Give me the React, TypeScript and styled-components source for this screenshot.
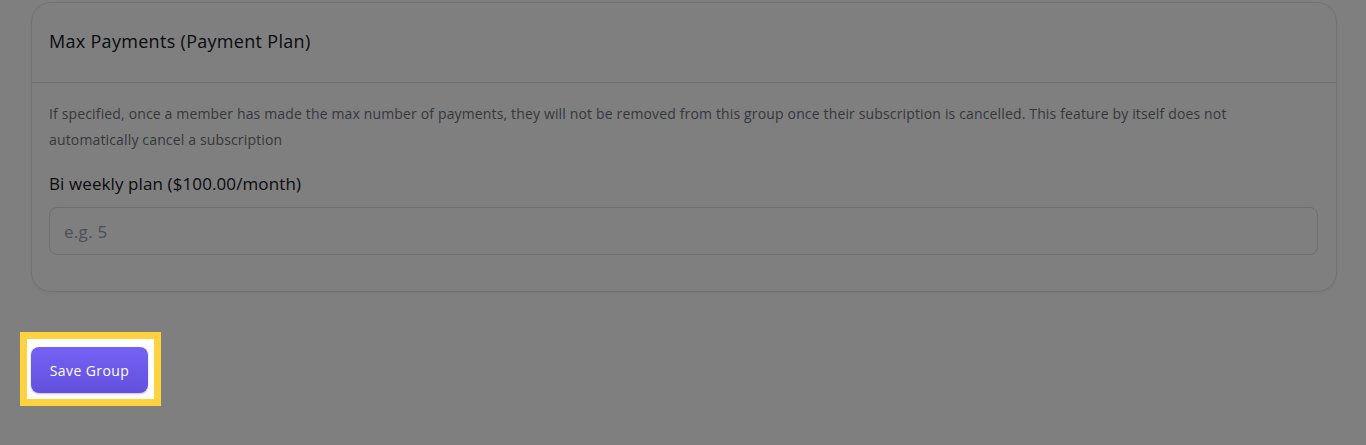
import { createGlobalStyle } from 'styled-components'
import styled from 'styled-components'

const GlobalStyle = createGlobalStyle`
  html, body {
    margin: 0;
    padding: 0;
    background: #ffffff;
    font-family: 'Open Sans', 'Noto Sans', sans-serif;
  }
`

const Page = styled.div`
  position: relative;
  min-height: 445px;
  padding: 2px 29px 0 31px;
  box-sizing: border-box;
`

const Overlay = styled.div`
  position: fixed;
  inset: 0;
  background: rgba(0, 0, 0, 0.5);
  z-index: 1;
`

const Card = styled.section`
  background: #ffffff;
  border: 1px solid #e4e5ea;
  border-radius: 20px;
  box-shadow: 0 1px 3px rgba(0, 0, 0, 0.06);
`

const CardHeader = styled.header`
  display: flex;
  align-items: center;
  height: 80px;
  padding: 0 17px 4px;
  box-sizing: border-box;
  border-bottom: 1px solid #dcdde2;
`

const Title = styled.h2`
  margin: 0;
  font-size: 18px;
  font-weight: 500;
  letter-spacing: 0.3px;
  color: #15161e;
`

const CardBody = styled.div`
  padding: 18px 18px 36px 17px;
`

const Description = styled.p`
  margin: 0;
  max-width: 1240px;
  font-size: 14px;
  line-height: 26px;
  letter-spacing: 0.15px;
  color: #6b6f7b;
`

const Field = styled.label`
  display: flex;
  flex-direction: column;
  gap: 11px;
  margin-top: 19px;
`

const LabelText = styled.span`
  font-size: 17px;
  line-height: 24px;
  font-weight: 500;
  letter-spacing: 0.1px;
  color: #15161e;
`

const Input = styled.input`
  height: 48px;
  box-sizing: border-box;
  border: 1px solid #dcdde2;
  border-radius: 8px;
  padding: 0 14px;
  font-family: inherit;
  font-size: 17px;
  letter-spacing: 0.3px;
  color: #1c1d26;
  background: #ffffff;

  &::placeholder {
    color: #9a9daa;
  }
`

const Actions = styled.div`
  display: flex;
  margin: 40px 0 0 -11px;
`

const Highlight = styled.div`
  position: relative;
  z-index: 2;
  display: flex;
  padding: 8px 6px 6px 4px;
  background: #ffffff;
  border: 7px solid #ffd23f;
`

const PrimaryButton = styled.button`
  width: 117px;
  height: 46px;
  border: none;
  border-radius: 8px;
  background: linear-gradient(180deg, #7462f6 0%, #6450dc 100%);
  box-shadow: 0 1px 2px rgba(60, 40, 160, 0.3);
  color: #ffffff;
  font-family: inherit;
  font-size: 14px;
  font-weight: 500;
  letter-spacing: 0.4px;
  cursor: pointer;
`

export default function App() {
  return (
    <>
      <GlobalStyle />
      <Page>
        <Card>
          <CardHeader>
            <Title>Max Payments (Payment Plan)</Title>
          </CardHeader>
          <CardBody>
            <Description>
              If specified, once a member has made the max number of payments, they will not be removed from this group
              once their subscription is cancelled. This feature by itself does not automatically cancel a subscription
            </Description>
            <Field>
              <LabelText>Bi weekly plan ($100.00/month)</LabelText>
              <Input placeholder="e.g. 5" />
            </Field>
          </CardBody>
        </Card>
        <Actions>
          <Highlight>
            <PrimaryButton>Save Group</PrimaryButton>
          </Highlight>
        </Actions>
        <Overlay />
      </Page>
    </>
  )
}
